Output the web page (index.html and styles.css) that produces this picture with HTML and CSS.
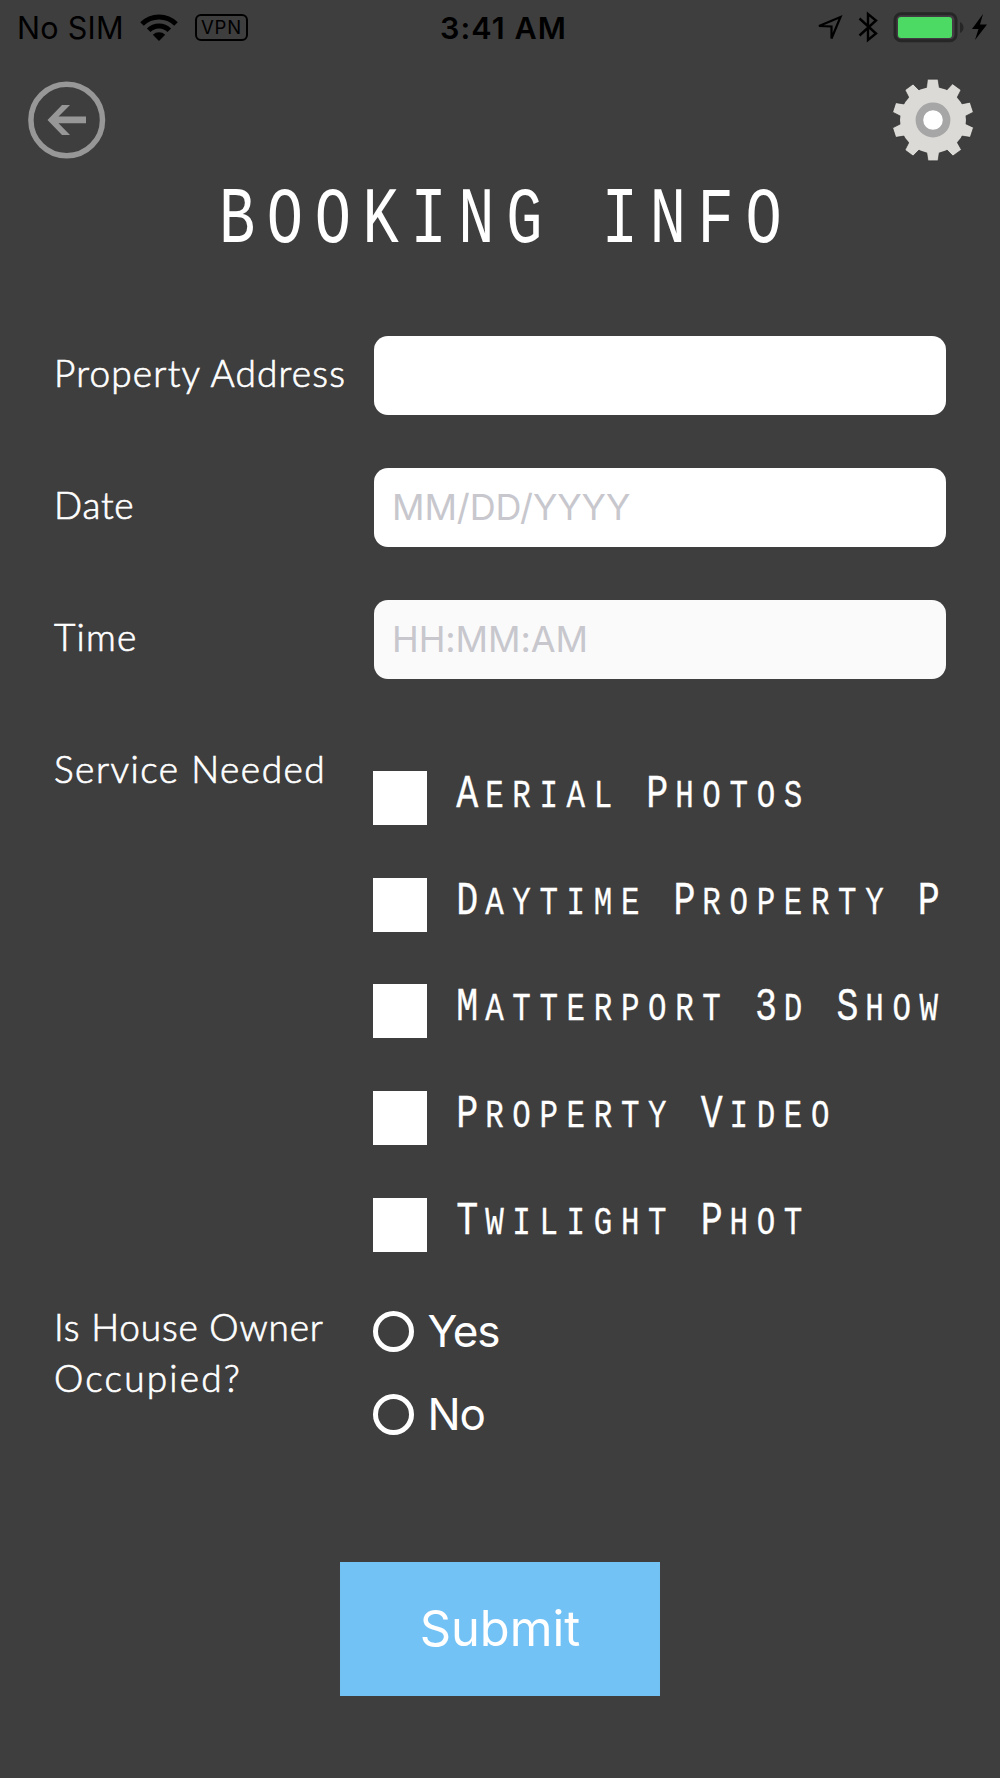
FILE: index.html
```html
<!DOCTYPE html>
<html lang="en">
<head>
<meta charset="utf-8">
<title>Booking Info</title>
<link rel="stylesheet" href="styles.css">
</head>
<body>
<div class="screen">
  <div class="status">
    <div class="status-left">
      <span class="carrier">No SIM</span>
      <svg class="wifi" width="38" height="28" viewBox="0 0 38 28">
        <path d="M19 27 L12.8 20.7 A9 9 0 0 1 25.2 20.7 Z" fill="#000"/>
        <path d="M8.7 16.3 A14.6 14.6 0 0 1 29.3 16.3" fill="none" stroke="#000" stroke-width="5"/>
        <path d="M2 10 A24 24 0 0 1 36 10" fill="none" stroke="#000" stroke-width="5"/>
      </svg>
      <span class="vpn">VPN</span>
    </div>
    <span class="clock">3:41 AM</span>
    <svg class="status-right" width="176" height="40" viewBox="814 8 176 40">
      <path d="M819 26 L840.5 17 L831.5 38.5 V26.5 Z" fill="none" stroke="#000" stroke-width="2.2"/>
      <path d="M859.5 18.5 L876 33.5 L868 40 V14 L876 20.5 L859.5 35.5" fill="none" stroke="#000" stroke-width="2.4"/>
      <rect x="895" y="13.7" width="61" height="27" rx="6" fill="#433a43" stroke="#262626" stroke-width="3"/>
      <rect x="898" y="17" width="54" height="21" rx="3" fill="#4cd964"/>
      <path d="M960 22 Q963.5 24 963.5 27.5 Q963.5 31 960 33 Z" fill="#262626"/>
      <path d="M983 14 L972 29 H978.5 L975 40 L987 24.500 H980 Z" fill="#000"/>
    </svg>
  </div>

  <div class="toolbar">
    <svg width="80" height="80" viewBox="27 80 80 80">
      <circle cx="66.700" cy="120" r="35.800" fill="none" stroke="#979797" stroke-width="5.500"/>
      <path d="M47.500 120 L62 105 H70 L58.500 116.500 H86 V123.200 H58.500 L70 135 H62 Z" fill="#979797"/>
    </svg>
    <svg width="86" height="86" viewBox="-43 -43 86 86">
      <g fill="#dbdad6" stroke="#2c2c2c" stroke-width="0.600">
        <path id="tooth" d="M-5.500 -40.800 H5 L7 -28 V28 L5 40.800 H-5 L-7 28 V-28 Z"/>
        <use href="#tooth" transform="rotate(36)"/>
        <use href="#tooth" transform="rotate(72)"/>
        <use href="#tooth" transform="rotate(108)"/>
        <use href="#tooth" transform="rotate(144)"/>
      </g>
      <circle r="33" fill="#dbdad6"/>
      <circle r="13.600" fill="#fff" stroke="#a6a6a6" stroke-width="7.600"/>
    </svg>
  </div>

  <h1 class="title">BOOKING INFO</h1>

  <form class="form">
    <label class="label w-address" for="address">Property Address</label>
    <input class="field" id="address" type="text">

    <label class="label w-date" for="date">Date</label>
    <input class="field" id="date" type="text" placeholder="MM/DD/YYYY">

    <label class="label w-time" for="time">Time</label>
    <input class="field muted" id="time" type="text" placeholder="HH:MM:AM">

    <div class="label w-service">Service Needed</div>
    <div class="services">
      <label class="service"><span class="box"></span><span class="name"><b>A</b>erial <b>P</b>hotos</span></label>
      <label class="service"><span class="box"></span><span class="name"><b>D</b>aytime <b>P</b>roperty <b>P</b></span></label>
      <label class="service"><span class="box"></span><span class="name"><b>M</b>atterport <b>3</b>d <b>S</b>how</span></label>
      <label class="service"><span class="box"></span><span class="name"><b>P</b>roperty <b>V</b>ideo</span></label>
      <label class="service"><span class="box"></span><span class="name"><b>T</b>wilight <b>P</b>hot</span></label>
    </div>

    <div class="label w-owner">Is House Owner<br><span class="w-occupied">Occupied?</span></div>
    <div class="radios">
      <label class="radio"><span class="ring"></span>Yes</label>
      <label class="radio"><span class="ring"></span>No</label>
    </div>
  </form>

  <button class="submit" type="button">Submit</button>
</div>
</body>
</html>
```

FILE: styles.css
```css
* { box-sizing: border-box; }

body {
  margin: 0;
  background: #3e3e3e;
  color: #fff;
  font-family: Inter, "Liberation Sans", sans-serif;
}

.screen {
  width: 1000px;
  height: 1778px;
  overflow: hidden;
  background: #3e3e3e;
}

/* Status bar */
.status {
  display: grid;
  grid-template-columns: 1fr auto 1fr;
  align-items: center;
  height: 55px;
  padding: 0 10px 0 17px;
  color: #000;
}
.status-left { display: flex; align-items: center; }
.carrier { width: 123px; font-size: 30.5px; letter-spacing: 0.3px; }
.vpn {
  width: 53px;
  height: 27px;
  margin-left: 17px;
  border: 2.5px solid #000;
  border-radius: 6px;
  font-size: 18.5px;
  line-height: 22px;
  text-align: center;
  letter-spacing: 0.8px;
}
.clock { font-size: 30.5px; font-weight: 600; letter-spacing: 1.1px; }
.status-right { justify-self: end; }

.toolbar {
  display: flex;
  align-items: center;
  justify-content: space-between;
  height: 130px;
  padding: 0 24px 0 27px;
}

.title {
  width: 800px;
  height: 60px;
  margin: 6px 0 0 219px;
  font: 400 80.5px/60px "Liberation Mono", monospace;
  letter-spacing: 15.5px;
  white-space: nowrap;
  transform: scaleX(0.75);
  transform-origin: left;
}

/* Booking form */
.form {
  display: grid;
  grid-template-columns: 320px 572px;
  grid-template-rows: 132px 132px 171px 532px 180px;
  align-items: start;
  margin-top: 85px;
  padding-left: 54px;
}
.label {
  padding-top: 11px;
  font: 300 37px/51px Lato, sans-serif;
  letter-spacing: 1.2px;
  white-space: nowrap;
  -webkit-text-stroke: 0.7px #fff;
}
.w-date { letter-spacing: 0.8px; }
.w-service { padding-top: 0; margin-top: -28px; letter-spacing: 1.5px; }
.w-owner { padding-top: 0; margin-top: -2px; letter-spacing: 0.8px; }
.w-occupied { letter-spacing: 2.2px; }

.field {
  width: 572px;
  height: 79px;
  padding: 0 18px 1px;
  border: 0;
  border-radius: 14px;
  background: #fff;
  font: 400 36px Inter, sans-serif;
  letter-spacing: -0.1px;
}
.field.muted { background: #fafafa; }
.field::placeholder { color: #c7c7cd; opacity: 1; }

.services {
  display: flex;
  flex-direction: column;
  gap: 52.7px;
  width: 572px;
  margin-left: -1px;
}
.service { display: flex; height: 54px; }
.box { width: 54px; height: 54px; background: #fff; flex: none; }
.name {
  margin-left: 31px;
  font: 400 39.5px/47px "Liberation Mono", monospace;
  letter-spacing: 11.1px;
  text-transform: uppercase;
  white-space: nowrap;
  transform: scaleX(0.78);
  transform-origin: left;
  -webkit-text-stroke: 0.3px #fff;
}
.name b {
  margin-left: -2.2px;
  font-size: 47px;
  font-weight: 400;
  letter-spacing: 8.8px;
}

.radios {
  display: flex;
  flex-direction: column;
  gap: 29px;
  margin: 1px 0 0 -1px;
}
.radio {
  display: flex;
  align-items: center;
  gap: 13.5px;
  height: 54px;
  font-size: 44px;
  letter-spacing: -1.2px;
}
.ring {
  width: 41px;
  height: 41px;
  border: 5px solid #fff;
  border-radius: 50%;
}

.submit {
  display: block;
  width: 320px;
  height: 134px;
  margin: 79px auto 0;
  padding: 0 0 1px;
  border: 0;
  background: #73c2f6;
  color: #fff;
  font: 400 48.8px Inter, sans-serif;
}
```
